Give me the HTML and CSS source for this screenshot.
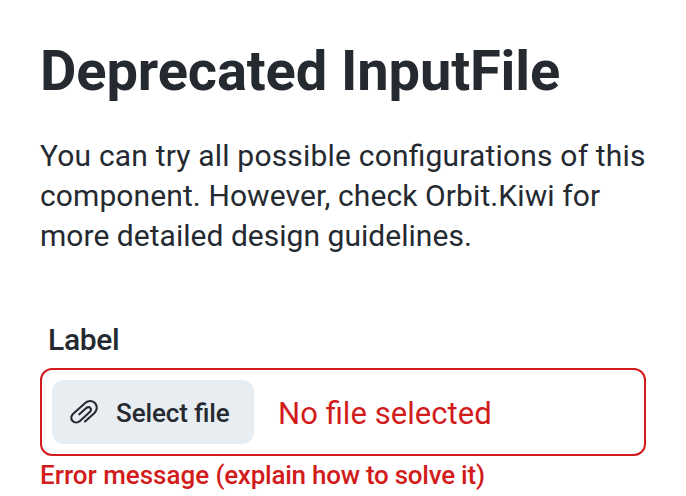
FILE: index.html
```html
<!DOCTYPE html>
<html lang="en">
<head>
<meta charset="utf-8">
<title>Deprecated InputFile</title>
<link rel="stylesheet" href="styles.css">
</head>
<body>
<main class="page">
  <h1 class="title">Deprecated InputFile</h1>
  <p class="intro"><span class="line-first">You can try all possible configurations of this</span> <span class="line-second">component. However, check Orbit.Kiwi for</span> <span class="line-third">more detailed design guidelines.</span></p>
  <div class="field">
    <span class="label">Label</span>
    <div class="input">
      <button class="button" type="button">
        <svg class="icon" viewBox="0 0 32 32" aria-hidden="true"><path d="M17 25.5L26.5 17C29.3 14.3 29.6 10 27.2 7.2C24.6 4.4 20.4 4.3 17.5 6.8L5.2 17.8C2.8 20 2.7 23 4.6 25C6.5 27 9.8 27 12 25L21.8 16C23.2 14.7 23.4 13 22.3 11.9C21.2 10.8 19.4 11 18 12.2L11.3 18.3"/></svg>
        <span>Select file</span>
      </button>
      <span class="filename">No file selected</span>
    </div>
    <p class="error"><span class="error-lead">Error message</span> (explain how to solve it)</p>
  </div>
</main>
</body>
</html>
```
FILE: styles.css
```css
* { box-sizing: border-box; }
body {
  margin: 0;
  background: #fff;
  color: #252a31;
  font-family: Roboto, "Liberation Sans", sans-serif;
  font-feature-settings: "liga" 1;
}
.page { height: 496px; padding: 39px 40px 0; overflow: hidden; }
.title { margin: 0; font-size: 56px; line-height: 64px; font-weight: 700; letter-spacing: -0.11px; }
.intro { margin: 33px -4px 0 0; font-size: 30px; line-height: 40px; }
.line-first { letter-spacing: 0.185px; }
.line-second { letter-spacing: 0.1px; }
.line-third { letter-spacing: 0.03px; }
.field { margin-top: 64px; }
.label { display: block; padding-left: 8px; font-size: 30px; line-height: 40px; font-weight: 500; letter-spacing: -0.3px; }
.input {
  display: flex;
  align-items: center;
  height: 88px;
  margin-top: 8px;
  padding: 0 10px;
  border: 2px solid #d21c1c;
  border-radius: 12px;
}
.button {
  display: flex;
  align-items: center;
  width: 202px;
  height: 64px;
  padding: 0 16px;
  gap: 16px;
  border: 0;
  border-radius: 12px;
  background: #e8edf1;
  color: #252a31;
  font: 500 26px/36px Roboto, sans-serif;
  font-feature-settings: "liga" 1;
  letter-spacing: -0.1px;
  white-space: nowrap;
}
.button span { padding-top: 2px; }
.icon { flex: none; width: 32px; height: 32px; fill: none; stroke: currentColor; stroke-width: 2.1; stroke-linecap: round; stroke-linejoin: round; }
.filename { margin-left: 24px; padding-top: 4px; color: #d21c1c; font-size: 31px; line-height: 40px; letter-spacing: 0.05px; }
.error { margin: 1px 0 0; color: #d21c1c; font-size: 26px; line-height: 36px; font-weight: 500; letter-spacing: -0.25px; }
.error-lead { letter-spacing: 0; }
```
